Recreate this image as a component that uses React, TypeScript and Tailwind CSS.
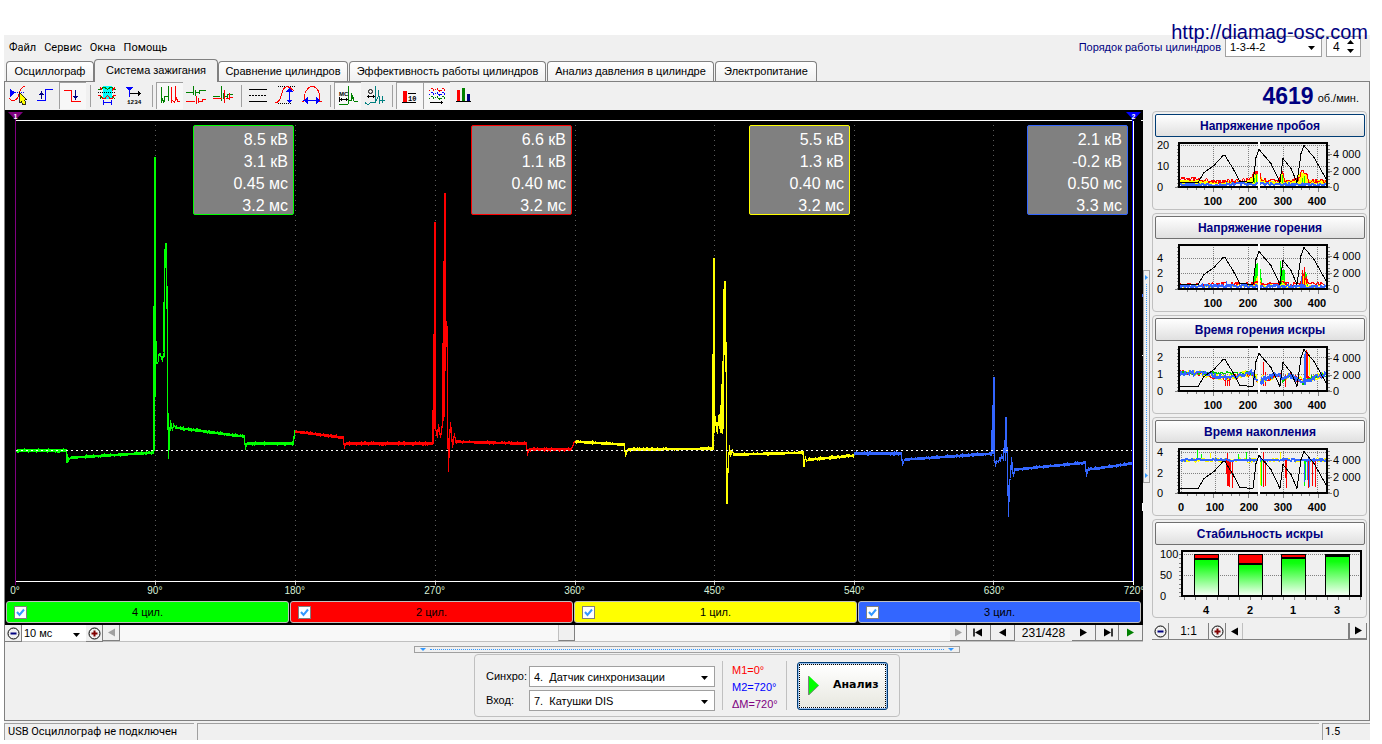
import type { ReactNode } from "react";

type Point = [number, number];

/* ---------- trace helpers ---------- */

function makeRandom(seed: number) {
  let s = seed * 7919 + 17;
  return () => {
    s = (s * 1103515245 + 12345) % 2147483648;
    return s / 2147483648;
  };
}

/* Long runs get a fine ripple on every column, short runs stay as drawn. */
function ripple(points: Point[], seed: number) {
  const rnd = makeRandom(seed);
  const out: string[] = [];
  points.forEach(([x, y], i) => {
    if (i === 0) {
      out.push(`${x},${y}`);
      return;
    }
    const [px, py] = points[i - 1];
    if (x - px > 12) {
      for (let c = px; c <= x; c += 1) {
        const base = py + ((y - py) * (c - px)) / (x - px);
        const a = rnd() > 0.85 ? 2 : 1;
        const b = rnd() > 0.85 ? 2 : 1.3;
        out.push(`${c},${(base - a).toFixed(1)}`);
        out.push(`${c},${(base + b).toFixed(1)}`);
      }
    } else out.push(`${x},${y}`);
  });
  return out.join(" ");
}

function noisy(points: Point[], jitter: number, seed: number) {
  const rnd = makeRandom(seed);
  const out: string[] = [];
  for (let i = 1; i < points.length; i += 1) {
    const [px, py] = points[i - 1];
    const [x, y] = points[i];
    for (let c = px; c < x; c += 1) {
      const base = py + ((y - py) * (c - px)) / (x - px);
      out.push(`${c},${(base + (rnd() - 0.5) * 2 * jitter).toFixed(1)}`);
    }
  }
  return out.join(" ");
}

/* ---------- main oscillogram ---------- */

const traces: { color: string; points: Point[] }[] = [
  {
    color: "#00ff00",
    points: [
      [16, 450], [66, 450], [66.5, 462], [67, 454], [68, 460], [70, 457], [153, 452], [153.5, 306], [154, 450],
      [154.5, 157], [155, 396], [155.5, 341], [156, 363], [158, 362], [158.5, 354], [160, 353], [161, 358],
      [162, 361], [163, 352], [163.5, 302], [164, 356], [164.5, 249], [165.5, 243], [166, 299], [166.5, 286],
      [167, 382], [168, 458], [169, 438], [170, 420], [172, 430], [173, 424], [175, 427], [244, 436], [245, 449],
      [246, 443], [293, 443], [294, 430],
    ],
  },
  {
    color: "#ff0000",
    points: [
      [295, 431], [343, 437], [344, 448], [345, 443], [432, 443], [432.5, 410], [433, 443], [433.5, 334],
      [434, 428], [434.5, 222], [435, 427], [437, 437], [438, 424], [440, 437], [442, 423], [442.5, 343],
      [443, 420], [443.5, 261], [444, 416], [444.5, 193], [445, 370], [445.5, 321], [446.5, 326], [447, 414],
      [448, 471], [449, 440], [450, 422], [451, 432], [452, 447], [454, 433], [455, 441], [526, 443],
      [527, 455], [528, 449], [570, 449], [572, 446], [574, 441],
    ],
  },
  {
    color: "#ffff00",
    points: [
      [575, 441], [624, 444], [625, 456], [627, 449], [712, 448], [712.5, 354], [713, 449], [713.5, 258],
      [714, 432], [715, 416], [716, 430], [717, 433], [718, 415], [719, 428], [720, 405], [720.5, 432],
      [721.5, 384], [722, 433], [722.5, 361], [723, 428], [723.5, 289], [724, 354], [724.5, 281], [725, 355],
      [725.5, 342], [726, 474], [726.5, 503], [727.5, 469], [729, 445], [730, 456], [732, 449], [733, 454],
      [803, 452], [803.5, 466], [805, 456], [806, 461], [808, 459], [853, 455],
    ],
  },
  {
    color: "#3366ff",
    points: [
      [854, 453], [901, 453], [902, 465], [904, 459], [991, 453], [991.5, 430], [992, 453], [992.5, 405],
      [993, 453], [993.5, 377], [994, 456], [995, 466], [996, 460], [998, 462], [999, 458], [1000, 461],
      [1001, 454], [1003, 460], [1004, 440], [1005, 460], [1005.5, 417], [1006.5, 450], [1007, 462], [1008, 516],
      [1009, 480], [1010, 478], [1011, 457], [1012, 469], [1013, 476], [1014, 469], [1085, 462], [1086, 476],
      [1087, 469], [1131, 463],
    ],
  },
];

const degreeTicks = [15, 155, 295, 435, 575, 714, 854, 993, 1133];
const degreeLabels = ["0°", "90°", "180°", "270°", "360°", "450°", "540°", "630°", "720°"];

const readouts = [
  { frame: "border-[#00ff00]", values: ["8.5 кВ", "3.1 кВ", "0.45 мс", "3.2 мс"] },
  { frame: "border-[#ff0000]", values: ["6.6 кВ", "1.1 кВ", "0.40 мс", "3.2 мс"] },
  { frame: "border-[#ffff00]", values: ["5.5 кВ", "1.3 кВ", "0.40 мс", "3.2 мс"] },
  { frame: "border-[#3366ff]", values: ["2.1 кВ", "-0.2 кВ", "0.50 мс", "3.3 мс"] },
];

const cylinders = [
  { name: "4 цил.", fill: "bg-[#00ff00]" },
  { name: "2 цил.", fill: "bg-[#ff0000]" },
  { name: "1 цил.", fill: "bg-[#ffff00]" },
  { name: "3 цил.", fill: "bg-[#3366ff]" },
];

function Marker({ n, color }: { n: string; color: string }) {
  return (
    <svg width="15" height="9" viewBox="0 0 15 9" aria-hidden="true">
      <path d="M0 0H15L7.5 8Z" fill={color} />
      <text x="7.5" y="6.5" textAnchor="middle" fill="#fff" fontFamily="Liberation Sans, sans-serif" fontSize="7" fontWeight="700">
        {n}
      </text>
    </svg>
  );
}

function Scope() {
  return (
    <section className="flex flex-1 flex-col bg-black pb-0.5" aria-label="Осциллограмма">
      <div className="relative flex flex-1 flex-col overflow-hidden">
        <svg
          className="absolute inset-0 h-full w-full"
          viewBox="5 110 1138 491"
          preserveAspectRatio="none"
          shapeRendering="crispEdges"
          fill="none"
          aria-hidden="true"
        >
          {degreeTicks.slice(1, -1).map((x) => (
            <path key={x} d={`M${x}.5 125V581`} stroke="#5c5c5c" strokeDasharray="1 4" />
          ))}
          {degreeTicks.slice(1).map((x) => (
            <path key={x} d={`M${x}.5 581V585`} stroke="#c0c0c0" />
          ))}
          {traces.map((t, i) => (
            <polyline key={t.color} points={ripple(t.points, i + 1)} stroke={t.color} strokeWidth="1.2" transform="translate(.5 .5)" />
          ))}
          <path d="M16 450.5H1132" stroke="#fff" strokeDasharray="2 3" />
          <path d="M15 120.5H1133M15 581.5H1134M1141 120.5H1143M1142 355.5H1143M1142.5 503V511" stroke="#fff" />
          <path d="M15.5 120V585" stroke="#800080" />
          <path d="M1132.5 118V581" stroke="#0000ff" />
          <path d="M1133.5 121V585" stroke="#fff" />
          <path d="M1142.5 294V297" stroke="#3366ff" />
        </svg>
        <div className="relative flex justify-between pr-0.5 pl-[3px] pt-0.5">
          <Marker n="1" color="#800080" />
          <Marker n="2" color="#0000ff" />
        </div>
        <div className="relative mt-1 grid grid-cols-4 justify-items-end pr-[15px] pl-[11px]">
          {readouts.map((r) => (
            <ul key={r.frame} className={`h-[90px] w-[101px] rounded-xs border bg-[#808080] pt-[3px] pr-[5px] text-right text-[16px] leading-[22px] text-white ${r.frame}`}>
              {r.values.map((v, i) => (
                <li key={i}>{v}</li>
              ))}
            </ul>
          ))}
        </div>
        <div className="relative mt-auto flex justify-between pr-[9px] pb-1 pl-[10px] text-[10px] leading-3 text-[#d8f0d8]">
          {degreeLabels.map((d) => (
            <span key={d} className="flex w-0 justify-center">
              {d}
            </span>
          ))}
        </div>
      </div>
      <div className="grid grid-cols-4 gap-px px-px pr-0.5">
        {cylinders.map((c) => (
          <label key={c.name} className={`flex h-[22px] items-center justify-center rounded-[3px] border border-[#c0c0c0] pr-5 pl-[7px] text-[11px] ${c.fill}`}>
            <span className="relative h-[13px] w-[13px]">
              <input type="checkbox" defaultChecked className="peer block h-[13px] w-[13px] appearance-none border border-[#808080] bg-white" />
              <svg viewBox="0 0 13 13" className="pointer-events-none absolute inset-0 hidden peer-checked:block" aria-hidden="true">
                <path d="M3 6L5.5 9L10 3.5" fill="none" stroke="#3399ff" strokeWidth="2" />
              </svg>
            </span>
            <span className="flex-1 text-center">{c.name}</span>
          </label>
        ))}
      </div>
    </section>
  );
}

/* ---------- toolbar ---------- */

interface Tool {
  label: string;
  pressed?: boolean;
  icon: ReactNode;
}

const toolGroups: Tool[][] = [
  [
    {
      label: "Уровень синхронизации",
      icon: (
        <>
          <path d="M5 6.5V15L10 10.7Z" fill="#0000ff" />
          <path d="M10 10.5H20" stroke="#0000ff" strokeDasharray="1 1" />
          <path d="M4.500 16C6 19.500 11 19.500 13 15C15 10 15 5 20 4.500" stroke="#f00" />
          <path d="M14.500 9.500V20.500L16.500 18.500L18 22.500H20V19L19.500 17.500H22Z" fill="#ff0" stroke="#000" strokeWidth=".8" />
        </>
      ),
    },
    {
      label: "По фронту",
      icon: (
        <>
          <path d="M5 18.500H13.500V7.500H21" stroke="#0000ff" />
          <path d="M9.500 9V17M7 12.500H12M8 11.500H11M9 10.500H10" stroke="#000080" />
        </>
      ),
    },
    {
      label: "По спаду",
      pressed: true,
      icon: (
        <>
          <path d="M5 8.500H12.500V19.500H21.500" stroke="#f00" />
          <path d="M16.500 8V18M14 14.500H19M15 15.500H18M16 16.500H17" stroke="#000080" />
        </>
      ),
    },
  ],
  [
    {
      label: "Период",
      icon: (
        <>
          <path d="M9 4H18V17H9Z" fill="#0ff" />
          <path d="M4 7.500H7L9 5.500H11L13.500 7.500L16 5.500H18L20 7.500H22" stroke="#008000" />
          <path d="M4 13.500H6L9 16.500H11L13.500 13.500L16 16.500H18L20 13.500H22" stroke="#f00" />
          <path d="M6 5.500L8 7.500M18 8.500L21 5.500" stroke="#f00" />
          <path d="M6 16.500L8 14.500M18 14.500L21 16.500" stroke="#008000" />
          <path d="M4 10.500H22" stroke="#000" strokeDasharray="1 1" />
          <path d="M9.500 18V23M17.500 18V23M10 20.500H17" stroke="#0000ff" />
        </>
      ),
    },
    {
      label: "Отметки времени",
      icon: (
        <>
          <path d="M5 5H12L8.500 9.500Z" fill="#0000ff" />
          <path d="M8.500 9V15" stroke="#0000ff" />
          <path d="M9 11.500H20M17.500 9V14M18.500 10V13" stroke="#000" />
          <text x="6" y="21.500" fontSize="6" fontWeight="700" fill="#000" fontFamily="Liberation Mono, monospace">1234</text>
        </>
      ),
    },
  ],
  [
    {
      label: "Последовательно",
      pressed: true,
      icon: (
        <>
          <path d="M5.500 21V5M5.500 15.500L8 20.500M8.500 20V14M9 14.500H12.500M12.500 4V19" stroke="#008000" />
          <path d="M15.500 5V21M15.500 17.500L19 20.500M19.500 4V19M20 15.500L22 19.500H24" stroke="#f00" />
        </>
      ),
    },
    {
      label: "Раздельно",
      icon: (
        <>
          <path d="M3 10.500H10M10.500 4V13M12.500 8V14M13 10.500H16M16.500 8V12M17 8.500H23" stroke="#008000" />
          <path d="M3 19.500H12M13.500 14V22M15.500 16V21M16 19.500H19M19.500 17V20M20 17.500H23" stroke="#f00" />
        </>
      ),
    },
    {
      label: "Наложение",
      icon: (
        <>
          <path d="M3 14.500H10M11.500 4V19M13.500 11V17M14 14.500H17M17.500 12V17M18 12.500H23" stroke="#008000" />
          <path d="M3 16.500H12M14.500 8V21M16 16.500H19M19.500 11V18M20 15.500H23" stroke="#f00" />
        </>
      ),
    },
  ],
  [
    {
      label: "Горизонтальные линии",
      icon: (
        <>
          <path d="M4 7.500H22M4 19.500H22" stroke="#000" />
          <path d="M4 13.500H22" stroke="#000" strokeDasharray="2 1" />
        </>
      ),
    },
    {
      label: "Амплитуда",
      icon: (
        <>
          <path d="M6 4.500H23M6 21.500H20" stroke="#000" strokeDasharray="1 1" />
          <path d="M3.500 21C8 20 9 15 10 11C11 7 13 5 15 4.500C19 5 20 8 22 9" stroke="#f00" />
          <path d="M17.500 7V20" stroke="#0000ff" />
          <path d="M17.500 5.500L21 9.500H14ZM17.500 21.500L21 17.500H14Z" fill="#0000ff" />
        </>
      ),
    },
    {
      label: "Длительность",
      icon: (
        <>
          <path d="M3 19.500H5C5 11 8 5 13.500 4.500C19 5 21 11 21 19.500H23" stroke="#f00" />
          <path d="M7 18.500H20" stroke="#0000ff" />
          <path d="M4.500 18.500L9 15V22ZM21.500 18.500L17 15V22Z" fill="#0000ff" />
        </>
      ),
    },
  ],
  [
    {
      label: "Миллисекунды",
      pressed: true,
      icon: (
        <>
          <path d="M5.500 15V20M14.500 15V20M6 17.500H14M7.500 16V19M12.500 16V19" stroke="#000" />
          <path d="M5 22.500H14M14.500 22V4M15 18.500H17.500V11M18 13.500L19.500 18.500M19.500 19V15M20 19.500H24" stroke="#008000" />
          <text x="5" y="14" fontSize="6" fontWeight="700" fill="#000" fontFamily="Liberation Sans, sans-serif">MC</text>
        </>
      ),
    },
    {
      label: "Градусы",
      icon: (
        <>
          <path d="M6 14.500H14M7.500 13V16M12.500 13V16" stroke="#000" />
          <path d="M4 19.500V21L7 22.500L10 20.500H14M14.500 21V4M15 18.500L17.500 14V8M18.500 14V22M21.500 14V21M19 18.500H24" stroke="#008080" />
          <circle cx="9.500" cy="9.500" r="2" stroke="#000" shapeRendering="geometricPrecision" />
        </>
      ),
    },
  ],
  [
    {
      label: "Шкала",
      pressed: true,
      icon: (
        <>
          <path d="M7 9H11V20H7Z" fill="#f00" />
          <path d="M6 20.500H20M12 11.500H20" stroke="#000" />
          <text x="12" y="19" fontSize="7" fontWeight="700" fill="#000" fontFamily="Liberation Mono, monospace">10</text>
        </>
      ),
    },
    {
      label: "Графики",
      pressed: true,
      icon: (
        <>
          <path d="M6 8.500L9 6.500L11 8.500L14 6.500L17 9.500L20 6.500L22 8.500" stroke="#f00" strokeDasharray="1.500 1" />
          <path d="M6 12.500L9 10.500L11 12.500L14 10.500L17 13.500L20 10.500L22 12.500" stroke="#0000ff" strokeDasharray="1.500 1" />
          <path d="M6 16.500L9 14.500L11 16.500L14 14.500L17 17.500L20 14.500L22 16.500" stroke="#008000" strokeDasharray="1.500 1" />
          <path d="M7 20.500H20M18.500 19V22" stroke="#000" />
        </>
      ),
    },
    {
      label: "Гистограмма",
      icon: (
        <>
          <path d="M7 8H10V19H7Z" fill="#f00" />
          <path d="M12 6H15V19H12Z" fill="#008000" />
          <path d="M17 12H20V19H17Z" fill="#000080" />
          <path d="M6 19.500H21" stroke="#000" />
        </>
      ),
    },
  ],
];

function Toolbar() {
  return (
    <div className="flex" role="toolbar">
      {toolGroups.map((group, g) => (
        <div key={g} className="flex">
          {g > 0 && (
            <span className="flex w-2 items-center justify-center">
              <span className="h-[22px] w-px bg-[#a0a0a0]" />
            </span>
          )}
          {group.map((t) => (
            <button
              key={t.label}
              type="button"
              aria-label={t.label}
              aria-pressed={!!t.pressed}
              className={t.pressed ? "h-[27px] w-[27px] border-t border-l border-[#a0a0a0] bg-[#f7f7f7]" : "h-[27px] w-[27px]"}
            >
              <svg
                width="27"
                height="27"
                viewBox="0 0 27 27"
                fill="none"
                shapeRendering="crispEdges"
                className={t.pressed ? "-mt-px -ml-px block" : "block"}
                aria-hidden="true"
              >
                {t.icon}
              </svg>
            </button>
          ))}
        </div>
      ))}
    </div>
  );
}

/* ---------- side charts ---------- */

const rpmCurve =
  "24,44 43,44 49,34 59,27 68,17 70,17 78,30 85,43 98,44 101,19 104,11 116,25 125,44 128,20 136,30 142,44 146,15 149,7 159,19 172,42";

function MiniChart({
  label,
  left,
  xLabels,
  children,
}: {
  label: string;
  left: [string, number][];
  xLabels: [string, number][];
  children: ReactNode;
}) {
  const minor = Array.from({ length: 13 }, (_, i) => 48 - i * 3.4);
  return (
    <svg viewBox="0 0 210 70" className="mt-px block w-full" fontFamily="Liberation Sans, sans-serif" fontSize="11" role="img" aria-label={label}>
      <g shapeRendering="crispEdges" fill="none">
        {xLabels.map(([t, x]) => (
          <path key={t} d={`M${x}.5 5V49`} stroke="#808080" strokeDasharray="1 1" />
        ))}
        {left.slice(0, -1).map(([t, y]) => (
          <path key={t} d={`M24 ${y}.500H172`} stroke="#808080" strokeDasharray="1 1" />
        ))}
        {minor.map((y) => (
          <path key={y} d={`M21.500 ${y.toFixed(0)}.500H24M173 ${y.toFixed(0)}.500H175`} stroke="#808080" />
        ))}
        <path d="M20 49.500H24M173 49.500H177M173 33.500H177M173 16.500H177" stroke="#808080" />
        {[32, 41, 49, 58, 67, 76, 84, 93, 102, 111, 119, 128, 137, 146, 154, 163].map((x) => (
          <path key={x} d={`M${x}.500 50V${x % 35 === 23 ? 54 : 52}`} stroke="#808080" />
        ))}
        {children}
        <path d="M24 5H173M24 49H173M24 4V50M172 4V50" stroke="#000" strokeWidth="2" />
        <path d="M104 4V50" stroke="#fff" strokeWidth="2" />
        <polyline points={rpmCurve} stroke="#000" transform="translate(0 .5)" />
      </g>
      {left.map(([t, y]) => (
        <text key={t} x="2" y={y + 4} fill="#000">
          {t}
        </text>
      ))}
      {[["4 000", 16], ["2 000", 33], ["0", 49]].map(([t, y]) => (
        <text key={t} x="178" y={Number(y) + 4} fill="#000">
          {t}
        </text>
      ))}
      {xLabels.map(([t, x]) => (
        <text key={t} x={x} y="67" textAnchor="middle" fontWeight="700" fill="#000">
          {t}
        </text>
      ))}
    </svg>
  );
}

const xStandard: [string, number][] = [["100", 58], ["200", 93], ["300", 128], ["400", 162]];
const xFull: [string, number][] = [["0", 26], ["100", 60], ["200", 94], ["300", 128], ["400", 162]];

function StabilityChart() {
  const bars: [string, number, number][] = [["4", 39, 12], ["2", 83, 17], ["1", 126, 11], ["3", 170, 9]];
  return (
    <svg viewBox="0 0 210 70" className="mt-px block w-full" fontFamily="Liberation Sans, sans-serif" fontSize="11" role="img" aria-label="Стабильность искры">
      <defs>
        <linearGradient id="stable" x1="0" y1="0" x2="0" y2="1">
          <stop offset="0" stopColor="#00ff00" />
          <stop offset=".15" stopColor="#10ff10" />
          <stop offset="1" stopColor="#ffffff" />
        </linearGradient>
      </defs>
      <g shapeRendering="crispEdges">
        <path d="M27 8.500H206M27 29.500H206" stroke="#808080" strokeDasharray="1 1" />
        {[8, 12, 17, 21, 25, 29, 33, 38, 42, 46, 50].map((y) => (
          <path key={y} d={`M24 ${y}.500H27`} stroke="#808080" />
        ))}
        {[29, 40, 51, 62, 73, 84, 95, 106, 117, 128, 139, 150, 161, 172, 183, 194, 205].map((x) => (
          <path key={x} d={`M${x}.500 51V54`} stroke="#808080" />
        ))}
        {bars.map(([n, x, y]) => (
          <g key={n} stroke="#000">
            <rect x={x + 0.5} y="8.500" width="24" height="42" fill="#f00" />
            <rect x={x + 0.5} y={y + 0.5} width="24" height={50 - y} fill="url(#stable)" />
            <path d={`M${x} ${y + 0.5}H${x + 25}`} strokeWidth="2" />
          </g>
        ))}
        <rect x="27" y="5" width="179" height="45" fill="none" stroke="#000" strokeWidth="2" />
      </g>
      {[["100", 8], ["50", 29], ["0", 50]].map(([t, y]) => (
        <text key={t} x="5" y={Number(y) + 4}>
          {t}
        </text>
      ))}
      {bars.map(([n, x]) => (
        <text key={n} x={x + 12} y="68" textAnchor="middle" fontWeight="700">
          {n}
        </text>
      ))}
    </svg>
  );
}

function ChartPanel({ title, focused, children }: { title: string; focused?: boolean; children: ReactNode }) {
  return (
    <section className="rounded border border-[#c0c0c0] pt-0.5 pr-px pb-px pl-0.5">
      <button
        type="button"
        className={`block h-[23px] w-full rounded-xs border bg-linear-to-b from-white to-[#e0e0e0] text-center text-[12px] leading-5 font-bold text-[#000080] ${
          focused ? "border-[#003c74]" : "border-[#707070]"
        }`}
      >
        {title}
      </button>
      {children}
    </section>
  );
}

function ArrowGlyph({ dir, bar, color = "#000" }: { dir: "left" | "right"; bar?: boolean; color?: string }) {
  return (
    <svg width="11" height="9" viewBox="0 0 11 9" className={dir === "left" ? "-scale-x-100" : ""} aria-hidden="true">
      <path d="M2 .5L9 4.500L2 8.500Z" fill={color} />
      {bar && <path d="M10 .5V8.500" stroke={color} strokeWidth="1.500" />}
    </svg>
  );
}

function ZoomButton({ plus }: { plus?: boolean }) {
  return (
    <button
      type="button"
      aria-label={plus ? "Увеличить" : "Уменьшить"}
      className="flex h-[17px] w-[17px] items-center justify-center border-r border-b border-[#808080] bg-[#f0f0f0]"
    >
      <svg width="13" height="13" viewBox="0 0 13 13" fill="none" aria-hidden="true">
        <circle cx="6.500" cy="6.500" r="5.500" stroke="#000" />
        <path d={plus ? "M3.500 6.500H9.500M6.500 3.500V9.500" : "M3.500 6.500H9.500"} stroke={plus ? "#800000" : "#000080"} strokeWidth="2" />
      </svg>
    </button>
  );
}

function NavButton({ label, className, children }: { label: string; className: string; children: ReactNode }) {
  return (
    <button
      type="button"
      aria-label={label}
      className={`flex items-center justify-center border-r border-b border-r-[#808080] border-b-[#808080] bg-[#f0f0f0] ${className}`}
    >
      {children}
    </button>
  );
}

function Sidebar() {
  return (
    <aside className="flex w-[215px] shrink-0 flex-col gap-[3px] pt-px pb-0.5">
      <ChartPanel title="Напряжение пробоя" focused>
        <MiniChart label="Напряжение пробоя" left={[["20", 7], ["10", 28], ["0", 49]]} xLabels={xStandard}>
          <path d="M24 42H44L62 44L75 43H90L96 40L99 34L105 35L108 42L124 44L127 34L129 42H140L146 34L151 36L154 42H172V46H24Z" fill="#ff0" />
          <polyline points={noisy([[24, 41], [44, 41], [62, 44], [92, 42], [98, 36], [104, 34], [107, 42], [124, 43], [127, 34], [130, 42], [143, 42], [147, 33], [151, 35], [154, 43], [172, 43]], 2, 2)} stroke="#f00" />
          <path d="M99 40V45M101.500 36V45M104.500 30V45M127.500 37V45M147.500 40V46M149.500 38V46" stroke="#0f0" />
          <polyline points={noisy([[24, 46], [60, 47], [90, 46], [172, 47]], 1.2, 3)} stroke="#3366ff" strokeWidth="2" />
        </MiniChart>
      </ChartPanel>
      <ChartPanel title="Напряжение горения">
        <MiniChart label="Напряжение горения" left={[["4", 18], ["2", 33], ["0", 49]]} xLabels={xStandard}>
          <path d="M98 46L100 30L102 22L106 30L107 46ZM125 46L125 18L127 30L130 30V46ZM146 46L151 30L153 46Z" fill="#0f0" />
          <path d="M99 46L102 36L104 34L107 46ZM126 46L128 38L130 46ZM146 46L149 34L153 44Z" fill="#ff0" />
          <path d="M147.500 30V46M149.500 27V46M151.500 36V46M146.500 38V46" stroke="#f00" />
          <polyline points={noisy([[24, 45], [98, 44], [102, 42], [108, 45], [126, 43], [145, 45], [149, 36], [153, 42], [157, 44], [172, 45]], 2.2, 5)} stroke="#f00" />
          <polyline points={noisy([[24, 46], [98, 46], [172, 46]], 1.5, 6)} stroke="#ff0" />
          <polyline points={noisy([[24, 46], [44, 46], [60, 46], [172, 47]], 1.4, 7)} stroke="#3366ff" strokeWidth="2" />
          <path d="M71.500 41V49M146.500 36V48" stroke="#3366ff" />
        </MiniChart>
      </ChartPanel>
      <ChartPanel title="Время горения искры">
        <MiniChart label="Время горения искры" left={[["2", 15], ["1", 32], ["0", 49]]} xLabels={xStandard}>
          <polyline points={noisy([[24, 31], [44, 31], [56, 35], [75, 36], [96, 31], [104, 40], [124, 33], [128, 38], [134, 33], [146, 39], [160, 35], [172, 33]], 3, 9)} stroke="#f00" />
          <path d="M70.500 36V44M72.500 36V44M74.500 36V44M108.500 20V44M110.500 30V44M152.500 10V36M130.500 33V45" stroke="#f00" />
          <polyline points={noisy([[24, 31], [44, 31], [56, 34], [75, 35], [96, 31], [104, 38], [124, 33], [128, 37], [134, 33], [146, 38], [160, 35], [172, 33]], 3.5, 10)} stroke="#ff0" />
          <polyline points={noisy([[24, 31], [96, 31], [104, 41], [118, 33], [124, 33], [128, 39], [134, 33], [148, 41], [158, 35], [172, 33]], 2, 11)} stroke="#0c0" />
          <polyline points={noisy([[24, 31], [44, 31], [56, 33], [75, 36], [96, 30], [104, 41], [112, 35], [124, 32], [128, 38], [134, 33], [148, 40], [160, 35], [172, 32]], 2, 12)} stroke="#3366ff" strokeWidth="2" />
          <path d="M149.500 12V40M150.500 10V36" stroke="#3366ff" />
          <path d="M151.500 8V36" stroke="#f00" />
          <path d="M154.500 12V34" stroke="#ff0" />
        </MiniChart>
      </ChartPanel>
      <ChartPanel title="Время накопления">
        <MiniChart label="Время накопления" left={[["4", 8], ["2", 29], ["0", 49]]} xLabels={xFull}>
          <polyline points={noisy([[26, 16], [172, 16]], 2.5, 14)} stroke="#ff0" />
          <path d="M42.500 6V16M46.500 10V14M91.500 8V16M83.500 10V16M149.500 16V42M150.500 16V36M106.500 16V42" stroke="#0f0" />
          <path d="M72.500 9V42M74.500 16V43M71.500 16V30M73.500 16V42M75.500 16V30M77.500 16V44M108.500 8V43M110.500 16V42M131.500 16V44M130.500 16V34M153.500 16V44M157.500 16V42M160.500 16V43" stroke="#f00" />
          <path d="M152.500 16V36M154.500 16V43M149.500 20V38" stroke="#3366ff" />
          <path d="M105.500 14V41M125.500 8V16M55.500 9V14" stroke="#ff0" />
          <polyline points={noisy([[26, 16], [172, 16]], 0.8, 16)} stroke="#3366ff" strokeWidth="2" />
        </MiniChart>
      </ChartPanel>
      <ChartPanel title="Стабильность искры">
        <StabilityChart />
      </ChartPanel>
      <div className="mt-0.5 flex h-[17px] border-b border-[#808080]">
        <ZoomButton />
        <span className="flex flex-1 items-center justify-center border-r border-[#808080] text-[12px]">1:1</span>
        <ZoomButton plus />
        <NavButton label="Назад" className="w-4 border-r-0 border-b-0">
          <ArrowGlyph dir="left" />
        </NavButton>
        <span className="w-[108px] border-r-2 border-l border-r-[#808080] border-l-[#c0c0c0]" />
        <NavButton label="Вперёд" className="w-[17px]">
          <ArrowGlyph dir="right" />
        </NavButton>
      </div>
    </aside>
  );
}

/* ---------- shared controls ---------- */

function Select({ id, value, className }: { id: string; value: string; className: string }) {
  return (
    <span className={`relative flex ${className}`}>
      <select id={id} className="h-full w-full appearance-none border border-[#a0a0a0] bg-white pr-4 pl-1 text-[11px] leading-4 text-black">
        <option>{value}</option>
      </select>
      <svg width="7" height="4" viewBox="0 0 7 4" className="pointer-events-none absolute top-1/2 right-[7px] -mt-px" aria-hidden="true">
        <path d="M0 0H7L3.500 4Z" />
      </svg>
    </span>
  );
}

const menu = ["Файл", "Сервис", "Окна", "Помощь"];

const tabs = [
  { name: "Осциллограф", size: "w-[88px]" },
  { name: "Система зажигания", size: "w-[124px]", active: true },
  { name: "Сравнение цилиндров", size: "w-[130px]" },
  { name: "Эффективность работы цилиндров", size: "w-[197px] ml-px" },
  { name: "Анализ давления в цилиндре", size: "w-[167px] ml-px" },
  { name: "Электропитание", size: "w-[102px] ml-px" },
];

export default function App() {
  return (
    <div className="relative min-h-screen bg-white pt-[35px] pr-3 pl-1 font-['Liberation_Sans',sans-serif] text-[12px] text-black">
      <a href="http://diamag-osc.com" className="absolute top-5 right-[14px] z-10 text-[20px] leading-6 text-[#000080]">
        http://diamag-osc.com
      </a>
      <div className="bg-[#f0f0f0]">
        <header className="flex h-6 justify-between">
          <nav className="flex items-center gap-2 pt-0.5 pl-[5px] font-['Roboto',sans-serif] text-[11px]">
            {menu.map((m) => (
              <button key={m} type="button">
                {m}
              </button>
            ))}
          </nav>
          <div className="flex items-start gap-1 pt-px pr-[9px]">
            <label htmlFor="order" className="pt-[3px] text-[11px] leading-4 text-[#000080]">
              Порядок работы цилиндров
            </label>
            <Select id="order" value="1-3-4-2" className="h-[21px] w-[97px]" />
            <span className="flex h-[21px] w-[35px] items-center border border-[#a0a0a0] bg-white pr-[6px]">
              <input aria-label="Число цилиндров" defaultValue="4" className="w-full min-w-0 pl-[6px] text-[12px]" />
              <svg width="7" height="13" viewBox="0 0 7 13" className="shrink-0" aria-hidden="true">
                <path d="M0 4H7L3.500 0ZM0 9H7L3.500 13Z" />
              </svg>
            </span>
          </div>
        </header>

        <div className="flex h-[22px] items-end pl-0.5" role="tablist">
          {tabs.map((t) => (
            <button
              key={t.name}
              type="button"
              role="tab"
              aria-selected={!!t.active}
              className={`rounded-t-sm border border-b-0 border-[#808080] text-[11px] whitespace-nowrap ${t.size} ${
                t.active ? "relative -mb-px h-[23px] bg-[#f0f0f0] pb-px" : "h-5 bg-linear-to-b from-white to-[#f0f0f0]"
              }`}
            >
              {t.name}
            </button>
          ))}
        </div>

        <main className="border border-[#808080] pb-[3px]">
          <div className="flex h-7 items-start justify-between">
            <Toolbar />
            <p className="flex items-center gap-1 pr-[10px] text-[11px]">
              <strong className="text-[23px] leading-7 text-[#000080]">4619</strong>
              <span className="pt-1">об./мин.</span>
            </p>
          </div>

          <div className="flex">
            <div className="flex min-w-0 flex-1 flex-col">
              <Scope />
              <div className="flex h-[17px] border-b border-[#c0c0c0]">
                <ZoomButton />
                <span className="relative flex h-4 w-16">
                  <select aria-label="Развёртка" className="w-full appearance-none bg-white pl-0.5 text-[11px] leading-4">
                    <option>10 мс</option>
                  </select>
                  <svg width="7" height="4" viewBox="0 0 7 4" className="pointer-events-none absolute top-1/2 right-[6px]" aria-hidden="true">
                    <path d="M0 0H7L3.500 4Z" />
                  </svg>
                </span>
                <ZoomButton plus />
                <NavButton label="Прокрутить влево" className="w-[17px]">
                  <ArrowGlyph dir="left" color="#a0a0a0" />
                </NavButton>
                <div className="flex flex-1 bg-[#f8f8f8]">
                  <span className="w-[438px] max-w-[53%]" />
                  <span className="w-[17px] border-r border-b border-l border-[#808080] border-l-[#c0c0c0] bg-[#f0f0f0]" />
                </div>
                <NavButton label="Прокрутить вправо" className="w-[17px]">
                  <ArrowGlyph dir="right" color="#a0a0a0" />
                </NavButton>
                <NavButton label="Первый кадр" className="w-6">
                  <ArrowGlyph dir="left" bar />
                </NavButton>
                <NavButton label="Предыдущий кадр" className="w-6">
                  <ArrowGlyph dir="left" />
                </NavButton>
                <output className="w-[57px] text-center text-[12px] leading-4">231/428</output>
                <NavButton label="Следующий кадр" className="w-6">
                  <ArrowGlyph dir="right" />
                </NavButton>
                <NavButton label="Последний кадр" className="w-[23px]">
                  <ArrowGlyph dir="right" bar />
                </NavButton>
                <NavButton label="Воспроизвести" className="w-6">
                  <ArrowGlyph dir="right" color="#008000" />
                </NavButton>
              </div>
            </div>
            <div className="mr-0.5 flex h-[213px] w-[7px] flex-col items-center justify-between self-center border border-[#a0a0a0] py-1">
              <svg width="3" height="5" viewBox="0 0 3 5" aria-hidden="true"><path d="M0 0L3 2.500L0 5Z" fill="#3399ff" /></svg>
              <span className="my-1 w-px flex-1 border-l border-dotted border-[#3399ff]" />
              <svg width="3" height="5" viewBox="0 0 3 5" aria-hidden="true"><path d="M0 0L3 2.500L0 5Z" fill="#3399ff" /></svg>
            </div>
            <Sidebar />
            <span className="w-0.5" />
          </div>

          <div className="mx-auto mt-1 flex h-[7px] w-[546px] items-center justify-between border border-[#a0a0a0] px-[5px]">
            <svg width="6" height="3" viewBox="0 0 6 3" aria-hidden="true"><path d="M0 0H6L3 3Z" fill="#3399ff" /></svg>
            <span className="mx-1 flex-1 border-t border-dotted border-[#3399ff]" />
            <svg width="6" height="3" viewBox="0 0 6 3" aria-hidden="true"><path d="M0 0H6L3 3Z" fill="#3399ff" /></svg>
          </div>

          <form className="mx-auto mt-px flex h-[63px] w-[426px] items-center rounded border border-[#c0c0c0] px-[11px]">
            <div className="grid grid-cols-[43px_186px] items-center gap-y-[3px] pt-[6px]">
              <label htmlFor="sync" className="text-[11px]">Синхро:</label>
              <Select id="sync" value="4.&nbsp; Датчик синхронизации" className="h-[21px]" />
              <label htmlFor="input" className="text-[11px]">Вход:</label>
              <Select id="input" value="7.&nbsp; Катушки DIS" className="h-[21px]" />
            </div>
            <span className="ml-[7px] h-[49px] w-px bg-[#c0c0c0]" />
            <div className="flex w-[63px] flex-col pt-1 pl-[9px] text-[11px] leading-[17px]">
              <span className="text-[#ff0000]">M1=0°</span>
              <span className="text-[#0000ff]">M2=720°</span>
              <span className="text-[#800080]">ΔM=720°</span>
            </div>
            <span className="h-[49px] w-px bg-[#c0c0c0]" />
            <button
              type="button"
              className="ml-auto flex h-[48px] w-[91px] items-center gap-3 rounded-[3px] border border-[#003c74] bg-[#98c0f0] p-px"
            >
              <span className="flex h-full w-full items-center gap-[14px] border border-dotted border-black bg-linear-to-b from-white to-[#e8e8e0] pl-2 font-['DejaVu_Sans',sans-serif] text-[11px] font-bold">
                <svg width="11" height="19" viewBox="0 0 11 19" aria-hidden="true"><path d="M1 0L11 9.500L1 19Z" fill="#00ff00" /><path d="M.5 0V19L10 10" fill="none" stroke="#808080" /></svg>
                Анализ
              </span>
            </button>
          </form>
        </main>

        <footer className="flex gap-[3px] pt-0.5 font-['Roboto',sans-serif] text-[11px] leading-4">
          <p className="h-[17px] w-[190px] border-t border-l border-[#a0a0a0] pl-[3px]">USB Осциллограф не подключен</p>
          <p className="h-[17px] flex-1 border-t border-l border-[#a0a0a0]" />
          <p className="h-[17px] w-[48px] border-t border-l border-[#a0a0a0] pl-0.5">1.5</p>
        </footer>
      </div>
    </div>
  );
}
